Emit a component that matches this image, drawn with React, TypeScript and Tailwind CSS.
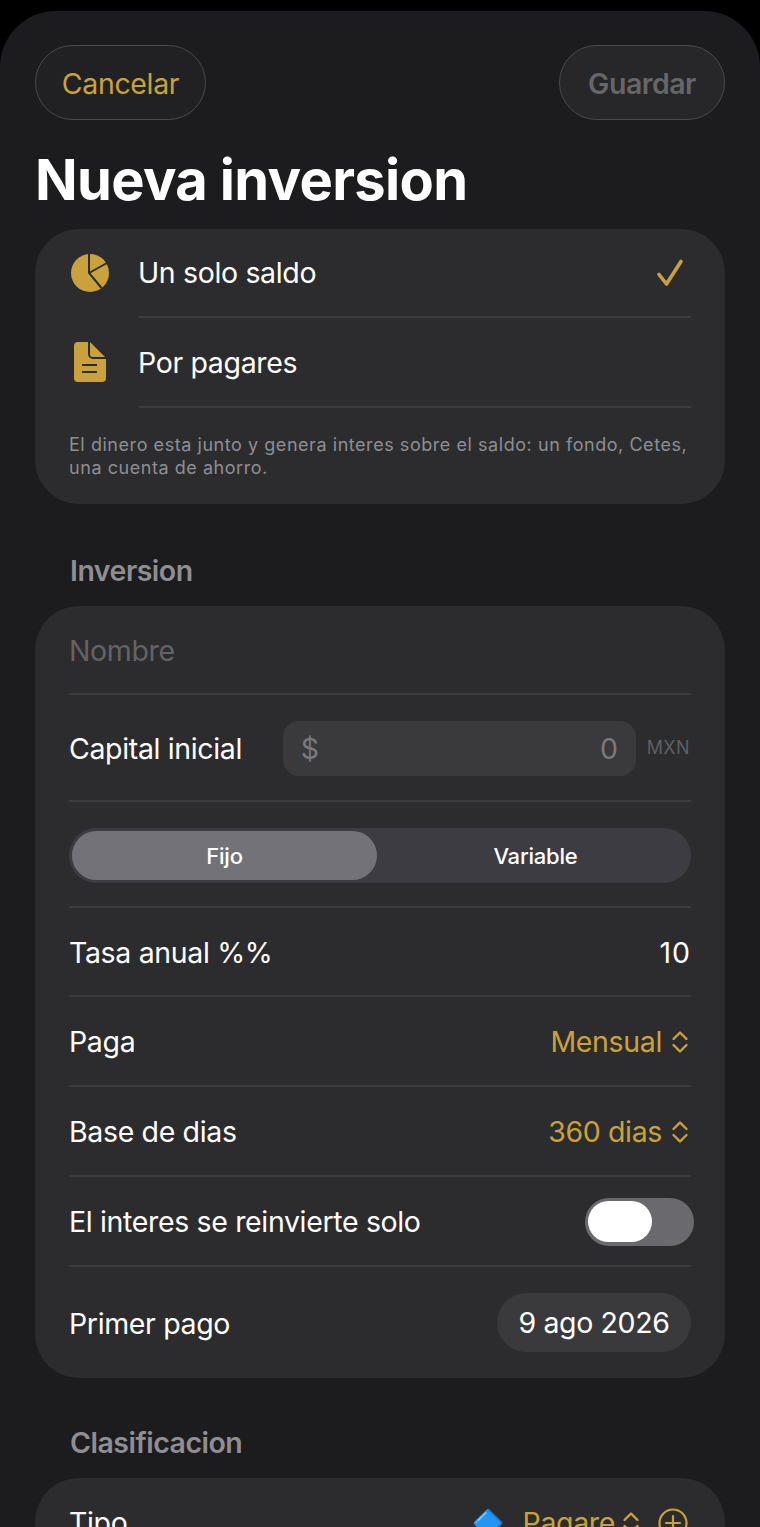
import React from 'react';

const font = { fontFamily: 'Inter, "Liberation Sans", sans-serif' };

const Divider = () => <div className="h-[2px] shrink-0 bg-[#3c3c3e]" />;

const Chevrons = ({ className = '' }: { className?: string }) => (
  <svg viewBox="0 0 18 24" className={`h-[24px] w-[18px] ${className}`} fill="none" stroke="#c9a23c" strokeWidth="2.4" strokeLinecap="round" strokeLinejoin="round">
    <path d="M2.5 9 9 2.5 15.5 9" />
    <path d="M2.5 15 9 21.5 15.5 15" />
  </svg>
);

const PieIcon = () => (
  <svg viewBox="0 0 40 40" className="h-[40px] w-[40px]">
    <circle cx="20" cy="20" r="19" fill="#c9a23c" />
    <path d="M19 1v19l12.5 15M19 20 37 10" fill="none" stroke="#2c2c2e" strokeWidth="2" />
  </svg>
);

const DocIcon = () => (
  <svg viewBox="0 0 32 40" className="h-[40px] w-[32px]">
    <path d="M4 0h12l16 16v20a4 4 0 0 1-4 4H4a4 4 0 0 1-4-4V4a4 4 0 0 1 4-4z" fill="#c9a23c" />
    <path d="M15 0v12a4 4 0 0 0 4 4h13" fill="none" stroke="#2c2c2e" strokeWidth="2" />
    <path d="M8 23h15M8 30h15" fill="none" stroke="#2c2c2e" strokeWidth="2" />
  </svg>
);

const Row = ({ label, short, children }: { label: string; short?: boolean; children?: React.ReactNode }) => (
  <div className={`flex items-center justify-between ${short ? 'h-[87px]' : 'h-[88px]'}`}>
    <span className="pt-[2px] text-white">{label}</span>
    {children}
  </div>
);

const Picker = ({ value }: { value: string }) => (
  <div className="mr-[2px] flex items-center gap-[9px] pt-[2px] text-[#c9a23c]">
    <span>{value}</span>
    <Chevrons />
  </div>
);

export default function App() {
  return (
    <div className="h-[1527px] overflow-hidden bg-black pt-[11px] text-[28.5px] leading-[36px] tracking-[-0.35px]" style={font}>
      <div className="h-full rounded-t-[56px] bg-[#1c1c1e] px-[35px] pt-[34px]">
        <div className="flex justify-between">
          <button className="h-[75px] w-[171px] rounded-full border border-[#4a4a4c] bg-[#212123] pt-[2px] text-[#c9a23c]">Cancelar</button>
          <button className="h-[75px] w-[166px] rounded-full border border-[#4a4a4c] bg-[#272729] pt-[2px] font-semibold tracking-[-0.5px] text-[#666668]">Guardar</button>
        </div>
        <h1 className="mt-[25px] h-[84px] text-[56px] leading-[70px] font-bold tracking-[-0.65px] text-white">Nueva inversion</h1>

        <div className="rounded-[44px] bg-[#2c2c2e] px-[34px]">
          <div className="flex h-[87px] items-center">
            <div className="flex w-[70px] justify-start pl-[1px]"><PieIcon /></div>
            <span className="-ml-[1px] flex-1 text-white">Un solo saldo</span>
            <svg viewBox="0 0 28 28" className="mr-[7px] h-[28px] w-[28px]" fill="none" stroke="#c9a23c" strokeWidth="3.6" strokeLinecap="round" strokeLinejoin="round">
              <path d="M3 15.5 10.5 25 25 2.5" />
            </svg>
          </div>
          <div className="ml-[70px]"><Divider /></div>
          <div className="flex h-[88px] items-center">
            <div className="flex w-[70px] justify-start pl-[5px]"><DocIcon /></div>
            <span className="-ml-[1px] flex-1 pt-[2px] text-white">Por pagares</span>
          </div>
          <div className="ml-[70px]"><Divider /></div>
          <p className="pt-[25px] pb-[25px] text-[18px] leading-[23px] tracking-[0.55px] text-[#8e8e93]">
            El dinero esta junto y genera interes sobre el saldo: un fondo, Cetes, una cuenta de ahorro.
          </p>
        </div>

        <div className="mt-[49px] mb-[17px] pl-[35px] font-semibold tracking-[-0.5px] text-[#8e8e93]">Inversion</div>

        <div className="rounded-[44px] bg-[#2c2c2e] px-[34px]">
          <div className="flex h-[87px] items-center pt-[2px] text-[#636366]">Nombre</div>
          <Divider />
          <div className="flex h-[105px] items-center justify-between">
            <span className="pt-[2px] text-white">Capital inicial</span>
            <div className="mt-[1px] ml-auto flex h-[55px] w-[353px] items-center justify-between rounded-[16px] bg-[#3a3a3c] px-[18px] pt-[2px] text-[#79797d]">
              <span>$</span>
              <span>0</span>
            </div>
            <span className="mr-[1px] ml-[11px] text-[18px] tracking-[0.4px] text-[#5f5f63]">MXN</span>
          </div>
          <Divider />
          <div className="pt-[26px] pb-[23px]">
            <div className="flex h-[55px] items-center rounded-full bg-[#3c3c42] p-[3px] text-[22px] font-medium tracking-[-0.2px] text-white">
              <div className="flex h-[49px] w-[305px] items-center justify-center rounded-full bg-[#727278]">Fijo</div>
              <div className="flex flex-1 items-center justify-center pl-[6px]">Variable</div>
            </div>
          </div>
          <Divider />
          <Row label="Tasa anual %%" short>
            <span className="pt-[2px] tracking-[1px] text-white">10</span>
          </Row>
          <Divider />
          <Row label="Paga">
            <Picker value="Mensual" />
          </Row>
          <Divider />
          <Row label="Base de dias">
            <Picker value="360 dias" />
          </Row>
          <Divider />
          <Row label="El interes se reinvierte solo">
            <div className="-mr-[3px] mt-[1px] flex h-[48px] w-[109px] items-center rounded-full bg-[#69696e] p-[3px]">
              <div className="h-[41px] w-[64px] rounded-full bg-white" />
            </div>
          </Row>
          <Divider />
          <div className="flex h-[111px] items-center justify-between">
            <span className="pt-[2px] text-white">Primer pago</span>
            <div className="flex h-[59px] w-[194px] items-center justify-center rounded-full bg-[#3a3a3c] text-white">9 ago 2026</div>
          </div>
        </div>

        <div className="mt-[47px] mb-[17px] pl-[35px] font-semibold tracking-[-0.5px] text-[#8e8e93]">Clasificacion</div>

        <div className="h-[200px] rounded-[44px] bg-[#2c2c2e] px-[34px]">
          <div className="flex h-[90px] items-center justify-between">
            <span className="text-white">Tipo</span>
            <div className="mr-[3px] flex items-center text-[#c9a23c]">
              <span className="mr-[19px] text-[26px] text-[#2f8fe8]">🔷</span>
              <span>Pagare</span>
              <Chevrons className="ml-[7px]" />
              <svg viewBox="0 0 30 30" className="-mt-[1px] ml-[18px] h-[30px] w-[30px]" fill="none" stroke="#c9a23c" strokeWidth="2.2" strokeLinecap="round">
                <circle cx="15" cy="15" r="13.5" />
                <path d="M15 8v14M8 15h14" />
              </svg>
            </div>
          </div>
        </div>
      </div>
    </div>
  );
}
